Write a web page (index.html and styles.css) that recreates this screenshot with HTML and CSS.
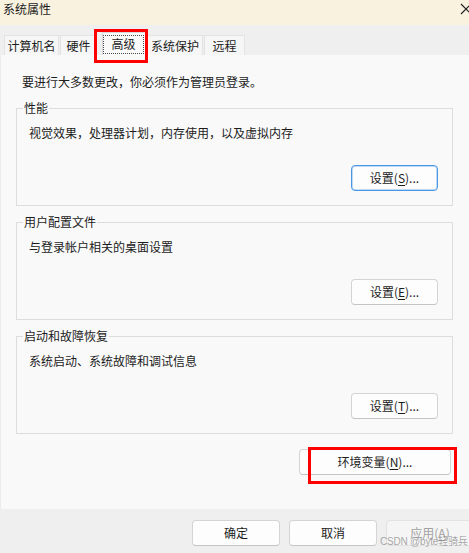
FILE: index.html
```html
<!DOCTYPE html>
<html lang="zh-CN">
<head>
<meta charset="utf-8">
<title>系统属性</title>
<link rel="stylesheet" href="styles.css">
</head>
<body>
<div class="window">
  <div class="titlebar">
    <span class="title">系统属性</span>
    <svg class="close" width="12" height="12" viewBox="0 0 12 12"><path d="M1 1 L11 11 M11 1 L1 11" stroke="#1e1e1e" stroke-width="1.1" fill="none"/></svg>
  </div>
  <div class="tabstrip">
    <div class="tab t1">计算机名</div>
    <div class="tab t2">硬件</div>
    <div class="tab t3 active"><span class="focus">高级</span></div>
    <div class="tab t4">系统保护</div>
    <div class="tab t5">远程</div>
  </div>
  <div class="panel">
    <p class="note">要进行大多数更改，你必须作为管理员登录。</p>
    <div class="group">
      <span class="legend">性能</span>
      <p class="desc">视觉效果，处理器计划，内存使用，以及虚拟内存</p>
      <button class="btn btn-set btn-focus">设置(<u>S</u>)...</button>
    </div>
    <div class="group">
      <span class="legend">用户配置文件</span>
      <p class="desc">与登录帐户相关的桌面设置</p>
      <button class="btn btn-set">设置(<u>E</u>)...</button>
    </div>
    <div class="group group-last">
      <span class="legend">启动和故障恢复</span>
      <p class="desc">系统启动、系统故障和调试信息</p>
      <button class="btn btn-set">设置(<u>T</u>)...</button>
    </div>
    <button class="btn btn-env">环境变量(<u>N</u>)...</button>
  </div>
  <div class="footer">
    <button class="btn">确定</button>
    <button class="btn">取消</button>
    <button class="btn disabled">应用(<u>A</u>)</button>
  </div>
  <div class="mark mark-tab"></div>
  <div class="mark mark-env"></div>
  <div class="watermark">CSDN @byte轻骑兵</div>
</div>
</body>
</html>
```
FILE: styles.css
```css
html, body {
  margin: 0;
  padding: 0;
  background: #f9f9f9;
}

.window {
  position: relative;
  width: 469px;
  height: 553px;
  overflow: hidden;
  font-family: "Noto Sans CJK SC", "Noto Sans", sans-serif;
  font-size: 12px;
  color: #1c1c1c;
}

.titlebar {
  height: 25px;
  box-sizing: border-box;
  background: #f9f2df;
  display: flex;
  align-items: flex-start;
  justify-content: space-between;
  padding-left: 3px;
  overflow: hidden;
}

.title {
  line-height: 18px;
  font-size: 12px;
}

.close {
  margin-top: 3px;
  margin-right: -3px;
  flex: none;
}

.tabstrip {
  height: 30px;
  box-sizing: border-box;
  background: #efefef;
  display: flex;
  align-items: flex-end;
  padding-left: 4px;
}

.tab {
  height: 20px;
  line-height: 20px;
  box-sizing: border-box;
  text-align: center;
  background: #f6f6f6;
  border: 1px solid #e3e3e3;
  border-bottom: none;
  margin-right: 1px;
  white-space: nowrap;
}

.t1 { width: 55px; }
.t2 { width: 37px; margin-right: 5px; }
.t3 { width: 44px; margin-right: 1px; }
.t4 { width: 56px; margin-right: 1px; }
.t5 { width: 41px; }

.tab.active {
  height: 23px;
  background: #f9f9f9;
  border-color: #d9d9d9;
}

.focus {
  display: block;
  box-sizing: border-box;
  width: 41px;
  height: 19px;
  margin-top: 2px;
  line-height: 16px;
  border: 1px dotted #4a4a4a;
}

.panel {
  height: 454px;
  box-sizing: border-box;
  background: #f9f9f9;
  border-left: 1px solid #ececec;
  padding: 18px 16px 0 15px;
  display: flex;
  flex-direction: column;
}

.note {
  margin: 0 0 17px 6px;
  line-height: 18px;
}

.group {
  position: relative;
  height: 98px;
  box-sizing: border-box;
  border: 1px solid #dddddd;
  padding: 15px 14px 0 12px;
  display: flex;
  flex-direction: column;
  margin-bottom: 16px;
}

.group-last {
  margin-bottom: 15px;
}

.legend {
  position: absolute;
  top: -9px;
  left: 6px;
  padding: 0 1px;
  line-height: 16px;
  background: #f9f9f9;
}

.desc {
  margin: 0;
  line-height: 18px;
}

.btn {
  font: inherit;
  color: #1c1c1c;
  width: 88px;
  height: 26px;
  padding: 0;
  box-sizing: border-box;
  background: #fdfdfd;
  border: 1px solid #d4d4d4;
  border-bottom-color: #c4c4c4;
  border-radius: 4px;
  line-height: 22px;
  text-align: center;
}

.btn u {
  text-underline-offset: 2px;
}

.btn-set {
  width: 87px;
  margin-top: 23px;
  align-self: flex-end;
}

.btn-focus {
  border: 1px solid #4a98e4;
  box-shadow: inset 0 0 0 1px rgba(74, 152, 228, 0.35);
}

.btn-env {
  width: 152px;
  align-self: flex-end;
  margin-right: 2px;
}

.footer {
  height: 44px;
  box-sizing: border-box;
  background: #efefef;
  padding: 11px 0 0 192px;
  display: flex;
  gap: 9px;
  overflow: hidden;
}

.footer .btn {
  flex: none;
}

.btn.disabled {
  background: #f5f5f5;
  border-color: #e2e2e2;
  color: #a2a2a2;
}

.mark {
  position: absolute;
  box-sizing: border-box;
  border: 3px solid #ff0000;
}

.mark-tab {
  left: 94px;
  top: 29px;
  width: 54px;
  height: 34px;
}

.mark-env {
  left: 308px;
  top: 447px;
  width: 149px;
  height: 37px;
}

.watermark {
  position: absolute;
  left: 380px;
  top: 534px;
  font-size: 10px;
  line-height: 15px;
  letter-spacing: -0.2px;
  color: rgba(140, 140, 140, 0.75);
  font-family: "Liberation Sans", "Noto Sans CJK SC", sans-serif;
  white-space: nowrap;
}
```
